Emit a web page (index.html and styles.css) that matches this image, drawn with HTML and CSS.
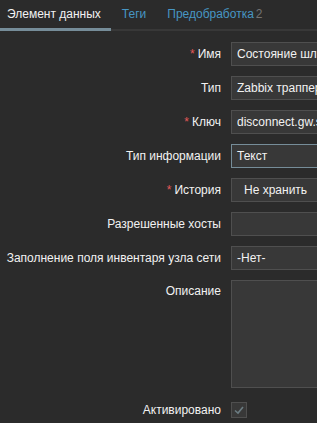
FILE: index.html
```html
<!DOCTYPE html>
<html lang="ru">

<head>
    <meta charset="UTF-8" />
    <meta name="viewport" content="width=device-width, initial-scale=1.0" />
    <title>Элемент данных</title>
    <link rel="stylesheet" href="styles.css">
</head>

<body>
    <nav class="tabs">
        <a class="tab active">Элемент данных</a>
        <a class="tab">Теги</a>
        <a class="tab">Предобработка <span class="count">2</span></a>
    </nav>

    <form class="form">
        <label class="label"><span class="req">*</span>Имя</label>
        <div class="field"><input class="input" type="text" value="Состояние шлюза"></div>

        <label class="label">Тип</label>
        <div class="field"><div class="input">Zabbix траппер</div></div>

        <label class="label"><span class="req">*</span>Ключ</label>
        <div class="field"><input class="input" type="text" value="disconnect.gw.status"></div>

        <label class="label">Тип информации</label>
        <div class="field"><div class="input select">Текст</div></div>

        <label class="label"><span class="req">*</span>История</label>
        <div class="field"><div class="input radio">Не хранить</div></div>

        <label class="label">Разрешенные хосты</label>
        <div class="field"><input class="input" type="text" value=""></div>

        <label class="label">Заполнение поля инвентаря узла сети</label>
        <div class="field"><div class="input">-Нет-</div></div>

        <label class="label top">Описание</label>
        <div class="field"><textarea class="input textarea"></textarea></div>

        <label class="label">Активировано</label>
        <div class="field">
            <span class="checkbox">
                <svg width="12" height="12" viewBox="0 0 12 12">
                    <path d="M2 6.5 L5 9 L10 3" fill="none" stroke="#6b7c82" stroke-width="1.6" />
                </svg>
            </span>
        </div>
    </form>
</body>

</html>
```
FILE: styles.css
```css
* {
    margin: 0;
    padding: 0;
    box-sizing: border-box;
}

body {
    background-color: #2b2b2b;
    color: #f2f2f2;
    font-family: "Liberation Sans", Arial, sans-serif;
    font-size: 12px;
    overflow: hidden;
}

.tabs {
    display: flex;
    height: 31px;
    border-bottom: 2px solid #383838;
}

.tab {
    display: flex;
    align-items: center;
    padding: 0 10px 2px 11px;
    color: #4796c4;
    font-size: 12px;
    white-space: nowrap;
}

.tab.active {
    color: #f2f2f2;
    padding-left: 7px;
    border-bottom: 3px solid #768d99;
    margin-bottom: -2px;
    padding-top: 1px;
}

.count {
    color: #737373;
    margin-left: 2px;
}

.form {
    display: grid;
    grid-template-columns: 221px 300px;
    column-gap: 10px;
    row-gap: 10px;
    margin-top: 11px;
}

.label {
    display: flex;
    align-items: center;
    justify-content: flex-end;
    height: 24px;
    white-space: nowrap;
    color: #f2f2f2;
}

.label.top {
    align-items: flex-start;
    padding-top: 4px;
}

.req {
    color: #e45959;
    margin-right: 3px;
}

.field {
    display: flex;
    align-items: center;
}

.input {
    display: flex;
    align-items: center;
    width: 100%;
    height: 24px;
    padding: 0 5px;
    background-color: #383838;
    border: 1px solid #4f4f4f;
    color: #f2f2f2;
    font-family: inherit;
    font-size: 12px;
    white-space: nowrap;
    overflow: hidden;
    outline: none;
}

.select {
    border-color: #768d99;
}

.radio {
    padding-left: 12px;
}

.textarea {
    height: 108px;
    resize: none;
}

.checkbox {
    display: flex;
    align-items: center;
    justify-content: center;
    width: 16px;
    height: 16px;
    margin-top: -1px;
    background-color: #383838;
    border: 1px solid #4f4f4f;
}
```
